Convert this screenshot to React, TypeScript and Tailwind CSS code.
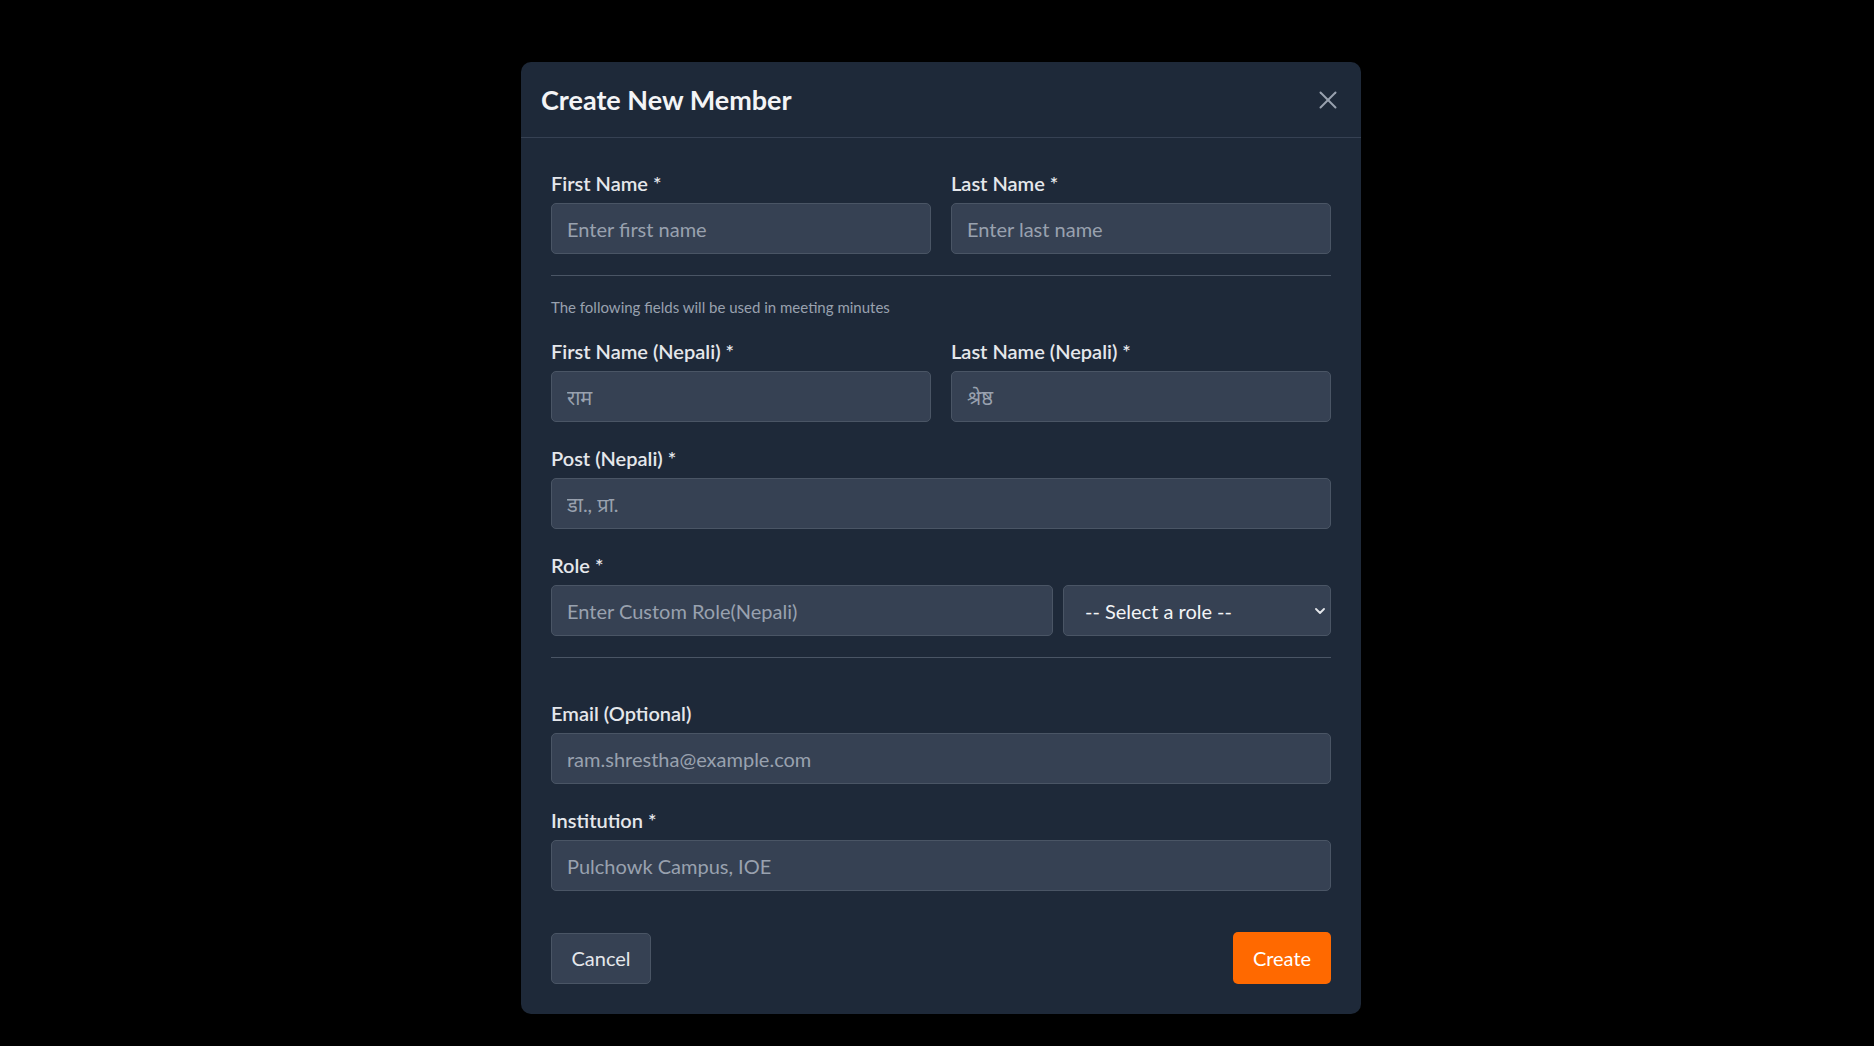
import { X } from "lucide-react"

const font = { fontFamily: "Lato, 'Noto Sans', 'Noto Sans Devanagari', sans-serif" }

function Label({ children }: { children: React.ReactNode }) {
  return (
    <label className="mb-[7px] block text-[20px] font-semibold leading-[25px] text-[#e5e7eb]">
      {children}
    </label>
  )
}

function Field({ placeholder }: { placeholder: string }) {
  return (
    <input
      type="text"
      placeholder={placeholder}
      className="h-[51px] w-full rounded-[5px] border border-[#4a5565] bg-[#364153] px-[15px] text-[20px] text-gray-100 outline-none placeholder:text-[#99a1af]"
    />
  )
}

function RoleSelect() {
  return (
    <div className="relative w-[268px] shrink-0">
      <select
        defaultValue=""
        className="h-[51px] w-full appearance-none rounded-[5px] border border-[#4a5565] bg-[#364153] pl-[21px] pr-8 text-[20px] text-[#f3f4f6] outline-none"
      >
        <option value="">-- Select a role --</option>
        <option value="chair">अध्यक्ष</option>
        <option value="member">सदस्य</option>
        <option value="secretary">सदस्य सचिव</option>
      </select>
      <svg
        viewBox="0 0 10 6"
        className="pointer-events-none absolute right-[6px] top-[23px] h-[6px] w-[10px] text-[#e5e7eb]"
        fill="none"
        stroke="currentColor"
        strokeWidth="1.8"
        strokeLinecap="round"
        strokeLinejoin="round"
      >
        <path d="M1 1l4 4 4-4" />
      </svg>
    </div>
  )
}

export default function App() {
  return (
    <div className="min-h-screen bg-black" style={font}>
      <div className="flex justify-center pl-2 pt-[62px]">
        <div className="w-[840px] rounded-[10px] bg-[#1e2939]">
          <div className="flex h-[76px] items-center justify-between border-b border-[#364153] pl-5 pr-[18px]">
            <h2 className="pt-px text-[27px] font-bold text-[#f3f4f6]">Create New Member</h2>
            <button aria-label="Close" className="text-[#99a1af]">
              <X size={30} strokeWidth={1.6} />
            </button>
          </div>

          <form className="flex flex-col px-[30px] pb-[30px] pt-[33px]" onSubmit={(e) => e.preventDefault()}>
            <div className="grid grid-cols-2 gap-5">
              <div>
                <Label>First Name *</Label>
                <Field placeholder="Enter first name" />
              </div>
              <div>
                <Label>Last Name *</Label>
                <Field placeholder="Enter last name" />
              </div>
            </div>

            <div className="mt-[21px] h-px bg-[#4a5565]" />

            <p className="mt-[21px] text-[15px] leading-[20px] text-[#99a1af]">
              The following fields will be used in meeting minutes
            </p>

            <div className="mt-[22px] grid grid-cols-2 gap-5">
              <div>
                <Label>First Name (Nepali) *</Label>
                <Field placeholder="राम" />
              </div>
              <div>
                <Label>Last Name (Nepali) *</Label>
                <Field placeholder="श्रेष्ठ" />
              </div>
            </div>

            <div className="mt-6">
              <Label>Post (Nepali) *</Label>
              <Field placeholder="डा., प्रा." />
            </div>

            <div className="mt-6">
              <Label>Role *</Label>
              <div className="flex gap-[10px]">
                <Field placeholder="Enter Custom Role(Nepali)" />
                <RoleSelect />
              </div>
            </div>

            <div className="mt-[21px] h-px bg-[#4a5565]" />

            <div className="mt-[43px]">
              <Label>Email (Optional)</Label>
              <Field placeholder="ram.shrestha@example.com" />
            </div>

            <div className="mt-6">
              <Label>Institution *</Label>
              <Field placeholder="Pulchowk Campus, IOE" />
            </div>

            <div className="mt-[41px] flex items-center justify-between">
              <button
                type="button"
                className="flex h-[51px] w-[100px] items-center justify-center rounded-[5px] border border-[#4a5565] bg-[#364153] text-[20px] text-[#e5e7eb]"
              >
                Cancel
              </button>
              <button
                type="submit"
                className="flex h-[52px] w-[98px] items-center justify-center rounded-[5px] bg-[#ff6900] text-[20px] text-white"
              >
                Create
              </button>
            </div>
          </form>
        </div>
      </div>
    </div>
  )
}
